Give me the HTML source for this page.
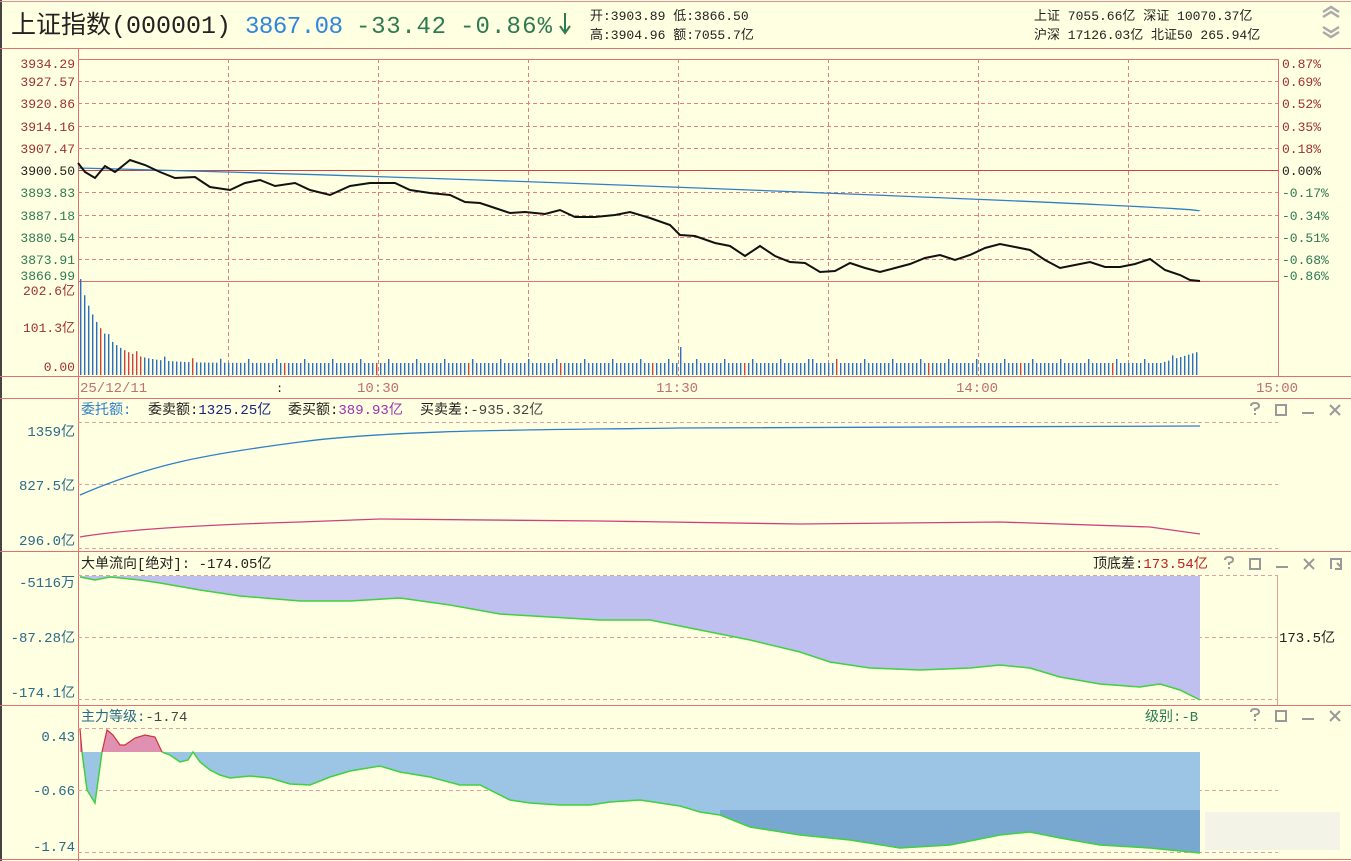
<!DOCTYPE html>
<html><head><meta charset="utf-8"><style>
html,body{margin:0;padding:0;background:#ffffe1;}
svg{display:block;font-family:"Liberation Mono","Noto Sans CJK SC",monospace;}
.cj{font-family:"Liberation Mono","Noto Sans CJK SC",monospace;}
</style></head><body>
<svg width="1351" height="861" viewBox="0 0 1351 861" xmlns="http://www.w3.org/2000/svg">
<rect width="1351" height="861" fill="#ffffe1"/>
<rect x="0" y="0" width="2" height="861" fill="#444"/>
<line x1="0" y1="1.5" x2="1351" y2="1.5" stroke="#e89090"/>
<line x1="0" y1="48.5" x2="1351" y2="48.5" stroke="#e07070"/>
<text x="11" y="33" font-size="25" fill="#222" font-family="Liberation Mono,Noto Sans CJK SC,monospace">上证指数(000001)</text>
<text x="245" y="33" font-size="24" fill="#2f86e0" font-family="Liberation Mono,monospace" textLength="98">3867.08</text>
<text x="356" y="33" font-size="24" fill="#2e7a52" font-family="Liberation Mono,monospace" textLength="90">-33.42</text>
<text x="460" y="33" font-size="24" fill="#2e7a52" font-family="Liberation Mono,monospace" textLength="92">-0.86%</text>
<path d="M565,13 V32 M560,26 L565,33 L570,26" stroke="#2e7a52" stroke-width="2" fill="none"/>
<g font-size="13" fill="#222">
<text x="590" y="20">开:3903.89  低:3866.50</text>
<text x="590" y="39">高:3904.96  额:7055.7亿</text>
<text x="1034" y="20">上证 7055.66亿  深证 10070.37亿</text>
<text x="1034" y="39">沪深 17126.03亿  北证50 265.94亿</text>
</g>
<g stroke="#aaa" stroke-width="2.5" fill="none">
<path d="M1323,12 L1331,7 L1339,12 M1323,17 L1331,12 L1339,17"/>
<path d="M1323,27 L1331,32 L1339,27 M1323,32 L1331,37 L1339,32"/>
</g>
<g stroke="#e07070" fill="none">
<rect x="78.5" y="59.5" width="1200" height="222"/>
<line x1="78.5" y1="48" x2="78.5" y2="861"/>
<line x1="1278.5" y1="282" x2="1278.5" y2="376"/>
<line x1="0" y1="376.5" x2="1351" y2="376.5"/>
<line x1="0" y1="398.5" x2="1351" y2="398.5"/>
<line x1="0" y1="551.5" x2="1351" y2="551.5"/>
<line x1="0" y1="705.5" x2="1351" y2="705.5"/>
<line x1="0" y1="859.5" x2="1351" y2="859.5"/>
<line x1="78" y1="170.5" x2="1278" y2="170.5" stroke="#d04040"/>
</g>
<g stroke="#e08080" stroke-dasharray="4,3" fill="none">
<line x1="78" y1="81.5" x2="1278" y2="81.5"/><line x1="78" y1="103.5" x2="1278" y2="103.5"/>
<line x1="78" y1="126.5" x2="1278" y2="126.5"/><line x1="78" y1="148.5" x2="1278" y2="148.5"/>
<line x1="78" y1="192.5" x2="1278" y2="192.5"/><line x1="78" y1="215.5" x2="1278" y2="215.5"/>
<line x1="78" y1="237.5" x2="1278" y2="237.5"/><line x1="78" y1="259.5" x2="1278" y2="259.5"/>
<line x1="228.5" y1="59" x2="228.5" y2="376"/><line x1="378.5" y1="59" x2="378.5" y2="376"/>
<line x1="528.5" y1="59" x2="528.5" y2="376"/><line x1="678.5" y1="59" x2="678.5" y2="376"/>
<line x1="828.5" y1="59" x2="828.5" y2="376"/><line x1="978.5" y1="59" x2="978.5" y2="376"/>
<line x1="1128.5" y1="59" x2="1128.5" y2="376"/>
</g>
<g font-size="13" fill="#a03030" text-anchor="end">
<text x="75" y="68">3934.29</text><text x="75" y="86">3927.57</text><text x="75" y="108">3920.86</text>
<text x="75" y="131">3914.16</text><text x="75" y="153">3907.47</text><text x="75" y="175" fill="#222">3900.50</text>
<text x="75" y="197" fill="#2e7a52">3893.83</text><text x="75" y="220" fill="#2e7a52">3887.18</text>
<text x="75" y="242" fill="#2e7a52">3880.54</text><text x="75" y="264" fill="#2e7a52">3873.91</text>
<text x="75" y="280" fill="#2e7a52">3866.99</text>
<text x="75" y="295">202.6亿</text><text x="75" y="332">101.3亿</text><text x="75" y="371">0.00</text>
</g>
<g font-size="13" fill="#a03030">
<text x="1282" y="68">0.87%</text><text x="1282" y="86">0.69%</text><text x="1282" y="108">0.52%</text>
<text x="1282" y="131">0.35%</text><text x="1282" y="153">0.18%</text><text x="1282" y="175" fill="#222">0.00%</text>
<text x="1282" y="197" fill="#2e7a52">-0.17%</text><text x="1282" y="220" fill="#2e7a52">-0.34%</text>
<text x="1282" y="242" fill="#2e7a52">-0.51%</text><text x="1282" y="264" fill="#2e7a52">-0.68%</text>
<text x="1282" y="280" fill="#2e7a52">-0.86%</text>
</g>
<path d="M78,168 Q400,176 800,192 T1200,211" stroke="#2f7fc8" stroke-width="1.3" fill="none"/>
<polyline fill="none" stroke="#111" stroke-width="2" points="78,163 85,172 95,178 105,166 115,172 130,160 145,165 160,172 175,178 195,177 210,187 230,190 245,183 260,180 275,186 295,183 310,190 330,195 350,186 370,183 395,183 410,190 430,193 450,195 465,202 480,203 495,208 510,213 525,212 545,214 560,210 575,217 595,217 615,215 630,212 650,218 670,225 680,235 695,236 715,243 730,246 745,256 760,246 775,256 790,262 805,263 820,272 835,271 850,263 865,268 880,272 895,268 910,264 925,258 940,255 955,260 970,255 985,248 1000,244 1015,247 1030,250 1045,260 1060,268 1075,265 1090,262 1105,267 1120,267 1135,264 1150,259 1165,270 1180,275 1190,280 1200,281"/>
<g id="vol"></g>
<g font-size="14" fill="#c07070">
<text x="80" y="392">25/12/11</text><text x="357" y="392">10:30</text><text x="656" y="392">11:30</text>
<text x="956" y="392">14:00</text><text x="1256" y="392">15:00</text>
</g>
<text x="276" y="392" font-size="12" fill="#222">:</text>
<g stroke="#e0a0a0" stroke-dasharray="4,3"><line x1="78" y1="422.5" x2="1278" y2="422.5"/><line x1="78" y1="484.5" x2="1278" y2="484.5"/><line x1="78" y1="548.5" x2="1278" y2="548.5"/></g>
<g font-size="14" class="cj">
<text x="81" y="414" fill="#2f7fc8">委托额:</text>
<text x="148" y="414" fill="#222">委卖额:<tspan fill="#1a237e">1325.25亿</tspan></text>
<text x="288" y="414" fill="#222">委买额:<tspan fill="#a030b0">389.93亿</tspan></text>
<text x="420" y="414" fill="#222">买卖差:<tspan fill="#444">-935.32亿</tspan></text>
</g>
<g font-size="14" fill="#2a6a8a" text-anchor="end">
<text x="75" y="436">1359亿</text><text x="75" y="490">827.5亿</text><text x="75" y="545">296.0亿</text>
</g>
<path d="M80,495 C150,465 200,455 300,442 S550,430 678,428 L1200,426" stroke="#2f7fc8" stroke-width="1.3" fill="none"/>
<path d="M80,537 C120,530 200,525 300,522 L380,519 L600,521 L800,524 L1000,522 L1150,527 L1200,534" stroke="#d04080" stroke-width="1.3" fill="none"/>
<g stroke="#999" stroke-width="2" fill="none">
<g id="icons">
<path d="M1251,406 Q1251,403 1255,403 Q1259,403 1259,406 Q1259,408 1255,409 V411 M1255,413 V415"/>
<rect x="1276" y="405" width="10" height="10"/>
<path d="M1302,413 H1314"/>
<path d="M1330,405 L1340,415 M1340,405 L1330,415"/>
</g>
<use href="#icons" x="-26" y="154"/>
<use href="#icons" y="306"/>
<path d="M1331,569 V559 H1341 V569 H1335 M1337,563 L1341,567"/>
</g>
<g stroke="#e0a0a0" stroke-dasharray="4,3"><line x1="78" y1="575.5" x2="1278" y2="575.5"/><line x1="78" y1="637.5" x2="1278" y2="637.5"/><line x1="78" y1="699.5" x2="1278" y2="699.5"/></g>
<line x1="1277.5" y1="576" x2="1277.5" y2="705" stroke="#e0a0a0"/>
<polygon fill="#bfbff0" points="80,576 1200,576 1200,700 1180,690 1160,684 1140,687 1100,684 1060,677 1030,668 1000,665 970,668 920,670 870,668 830,662 800,652 750,640 700,630 650,620 600,620 550,617 500,614 450,605 400,598 350,601 300,601 240,596 200,590 160,583 140,580 110,577 95,580 80,577"/>
<polyline fill="none" stroke="#40d040" stroke-width="1.5" points="80,577 95,580 110,577 140,580 160,583 200,590 240,596 300,601 350,601 400,598 450,605 500,614 550,617 600,620 650,620 700,630 750,640 800,652 830,662 870,668 920,670 970,668 1000,665 1030,668 1060,677 1100,684 1140,687 1160,684 1180,690 1200,700"/>
<text x="81" y="568" font-size="14" fill="#222" class="cj">大单流向[绝对]: -174.05亿</text>
<text x="1093" y="568" font-size="14" fill="#222" class="cj">顶底差:<tspan fill="#c02020">173.54亿</tspan></text>
<g font-size="14" fill="#2a6a8a" text-anchor="end">
<text x="75" y="587">-5116万</text><text x="75" y="642">-87.28亿</text><text x="75" y="697">-174.1亿</text>
</g>
<text x="1279" y="642" font-size="14" fill="#222">173.5亿</text>
<g stroke="#e0a0a0" stroke-dasharray="4,3"><line x1="78" y1="728.5" x2="1278" y2="728.5"/><line x1="78" y1="790.5" x2="1278" y2="790.5"/><line x1="78" y1="852.5" x2="1278" y2="852.5"/></g>
<text x="81" y="721" font-size="14" fill="#2a6a8a" class="cj">主力等级:<tspan fill="#444">-1.74</tspan></text>
<text x="1145" y="721" font-size="14" fill="#2e7a52" class="cj">级别:-B</text>
<g font-size="14" fill="#2a6a8a" text-anchor="end">
<text x="75" y="741">0.43</text><text x="75" y="795">-0.66</text><text x="75" y="851">-1.74</text>
</g>
<defs><clipPath id="bc"><polygon points="82,752 1200,752 1200,853 1150,848 1100,845 1060,838 1030,832 1000,835 950,845 900,848 850,840 800,835 750,827 720,815 700,812 680,806 640,800 610,802 590,805 560,805 530,803 510,800 480,785 460,785 430,777 400,772 380,766 350,771 330,777 310,785 290,784 270,778 250,776 230,778 220,775 210,770 200,762 193,752 188,760 180,762 170,755 162,752 102,752 95,803 87,790"/></clipPath></defs>
<g clip-path="url(#bc)"><rect x="80" y="752" width="1120" height="110" fill="#9cc4e4"/><rect x="720" y="810" width="480" height="50" fill="#78a8d0"/></g>
<polygon fill="#e090b0" points="80,729 82,752 80,752"/>
<polygon fill="#e090b0" points="102,752 107,730 113,735 120,745 125,745 135,738 145,735 155,737 162,752"/>
<polyline fill="none" stroke="#d03040" stroke-width="1.2" points="80,729 82,752"/>
<polyline fill="none" stroke="#d03040" stroke-width="1.2" points="102,752 107,730 113,735 120,745 125,745 135,738 145,735 155,737 162,752"/>
<polyline fill="none" stroke="#40d040" stroke-width="1.5" points="82,752 87,790 95,803 102,752"/>
<polyline fill="none" stroke="#40d040" stroke-width="1.5" points="162,752 170,755 180,762 188,760 193,752 200,762 210,770 220,775 230,778 250,776 270,778 290,784 310,785 330,777 350,771 380,766 400,772 430,777 460,785 480,785 510,800 530,803 560,805 590,805 610,802 640,800 680,806 700,812 720,815 750,827 800,835 850,840 900,848 950,845 1000,835 1030,832 1060,838 1100,845 1150,848 1200,853"/>
<rect x="1205" y="812" width="135" height="38" fill="#f0f0ea" opacity="0.8"/>
</svg>
<script>
(function(){var g=document.getElementById('vol'),s='';
for(var i=0;i<280;i++){var x=80+i*4;var h=12+80*Math.exp(-i/6)+ (i%7==0?4:0)+ (i>270?(i-270)*1.2:0);
if(i==150)h=28;if(i==183)h=16;
var c=(i%23==5||(i>10&&i<16))?'#d04040':'#2a6fc0';
s+='<rect x="'+x+'" y="'+(375-h)+'" width="1.4" height="'+h+'" fill="'+c+'"/>';}
g.innerHTML=s;})();
</script>
</body></html>
